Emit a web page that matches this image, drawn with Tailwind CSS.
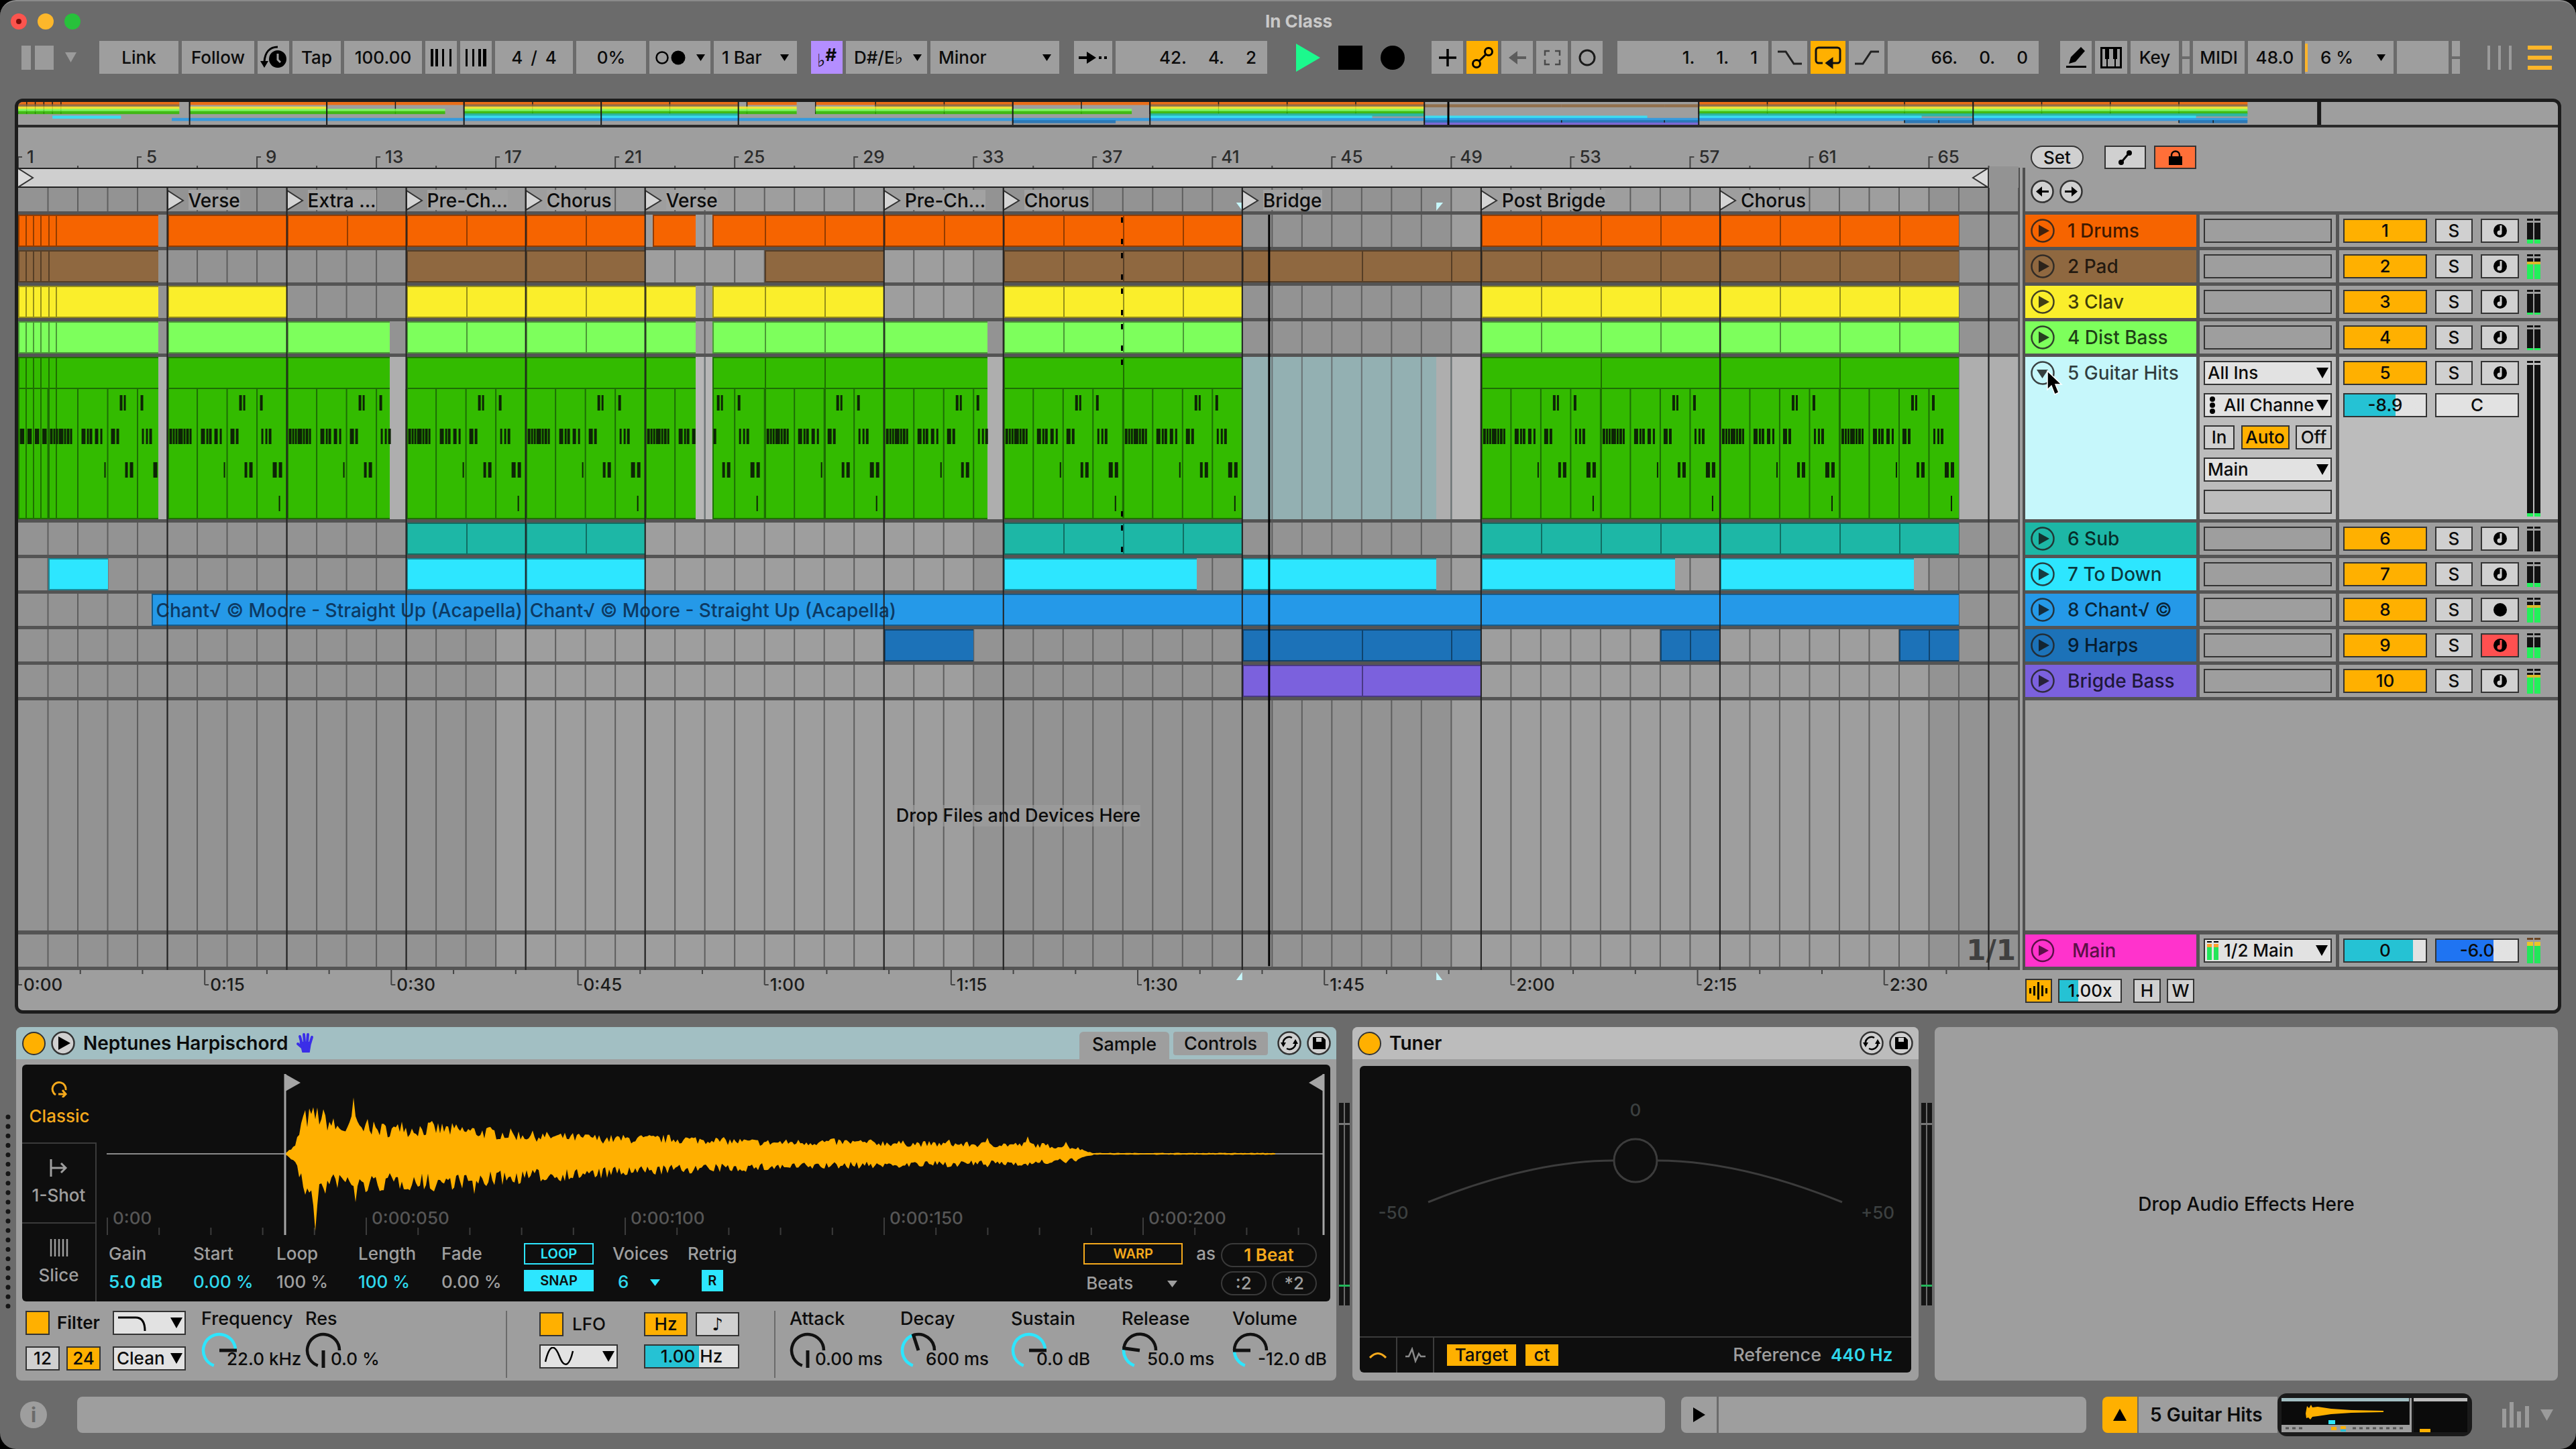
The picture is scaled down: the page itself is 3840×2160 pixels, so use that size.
<!DOCTYPE html>
<html lang="en">
<head>
  <meta charset="UTF-8" />
  <meta name="viewport" content="width=device-width, initial-scale=1.0" />
  <title>In Class</title>
  <script src="https://cdn.jsdelivr.net/npm/@tailwindcss/browser@4"></script>
  <style>
    body { font-family: Inter, 'DejaVu Sans', sans-serif; }
    input { min-width: 0; }
  </style>
</head>
<body class="bg-black text-[26px] leading-8 text-[#0c0c0c] font-medium">
<div class="relative flex min-h-screen flex-col overflow-hidden rounded-3xl border-t-2 border-[#8a8a8a] bg-[#6b6b6b]">

  <!-- Title bar -->
  <header class="relative flex h-[59px] items-center pl-4">
    <div class="flex gap-4">
      <span class="flex size-6 items-center justify-center rounded-full bg-[#fc544e]"><i class="size-2 rounded-full bg-[#7a0d0a]"></i></span>
      <span class="size-6 rounded-full bg-[#fdb72b]"></span>
      <span class="size-6 rounded-full bg-[#27c13b]"></span>
    </div>
    <h1 class="absolute inset-x-0 pl-8 text-center font-bold text-[#c9c9c9]">In Class</h1>
  </header>

  <!-- Control bar -->
  <nav class="flex h-[49px] items-stretch pl-8 pr-9">
    <button aria-label="Browser" class="flex w-[82px] items-center justify-between">
      <svg width="48" height="36"><path d="M0 0h14v36H0zM20 0h28v36H20z" fill="#9b9b9b"/></svg>
      <svg width="17" height="15"><path d="M0 0h17l-8.500 15z" fill="#9b9b9b"/></svg>
    </button>

    <div class="ml-[34px] flex gap-[5px]">
      <button class="w-[118px] bg-[#9e9e9e]">Link</button>
      <button class="w-[108px] bg-[#9e9e9e]">Follow</button>
      <button aria-label="Follow tempo" class="flex w-[47px] items-center justify-center bg-[#9e9e9e]">
        <svg width="40" height="36" viewBox="0 0 40 36"><circle cx="26" cy="20" r="13"/><path d="M26 12v9l4 4" fill="none" stroke="#9e9e9e" stroke-width="3"/><path d="M26 2C14 2 7 10 6 24" fill="none" stroke="#000" stroke-width="3"/><path d="M0 23h12l-6 10z"/></svg>
      </button>
      <button class="w-[72px] bg-[#9e9e9e]">Tap</button>
      <input aria-label="Tempo" value="100.00" class="w-[116px] bg-[#9e9e9e] text-center" />
      <button aria-label="Nudge down" class="flex w-[47px] items-center justify-center bg-[#9e9e9e]"><svg width="34" height="26"><path d="M1 0h4v26H1zM8 0h4v26H8zM18 0h3v26h-3zM29 0h3v26h-3z"/></svg></button>
      <button aria-label="Nudge up" class="flex w-[47px] items-center justify-center bg-[#9e9e9e]"><svg width="34" height="26"><path d="M1 0h3v26H1zM11 0h3v26h-3zM20 0h4v26h-4zM27 0h5v26h-5z"/></svg></button>
      <div class="flex w-[116px] items-center justify-center gap-3 bg-[#9e9e9e]"><span>4</span><span>/</span><span>4</span></div>
      <input aria-label="Groove amount" value="0%" class="w-[104px] bg-[#9e9e9e] text-center" />
      <button aria-label="Metronome" class="flex w-[91px] items-center justify-center gap-4 bg-[#9e9e9e]">
        <svg width="46" height="24"><circle cx="11" cy="12" r="8.500" fill="none" stroke="#000" stroke-width="2.500"/><circle cx="35" cy="12" r="10.500"/></svg>
        <svg width="13" height="10"><path d="M0 0h13l-6.500 10z"/></svg>
      </button>
      <button class="flex w-[124px] items-center justify-between bg-[#9e9e9e] px-3"><span>1 Bar</span><svg width="13" height="10"><path d="M0 0h13l-6.500 10z"/></svg></button>
    </div>

    <div class="ml-[21px] flex gap-[5px]">
      <button aria-label="Scale mode" class="flex w-[47px] items-center justify-center bg-[#b48eff] font-bold"><span class="pt-2">♭</span><span class="pb-2">#</span></button>
      <button class="flex w-[121px] items-center justify-between bg-[#9e9e9e] pl-3 pr-2"><span>D#/E♭</span><svg width="13" height="10"><path d="M0 0h13l-6.500 10z"/></svg></button>
      <button class="flex w-[192px] items-center justify-between bg-[#9e9e9e] px-3"><span>Minor</span><svg width="13" height="10"><path d="M0 0h13l-6.500 10z"/></svg></button>
    </div>

    <div class="ml-[22px] flex gap-[5px]">
      <button aria-label="Follow playback" class="flex w-[57px] items-center justify-center bg-[#9e9e9e]"><svg width="44" height="22"><path d="M0 9h12V2l14 9-14 9v-7H0zM30 9h4v4h-4zM38 9h4v4h-4z"/></svg></button>
      <div class="flex w-[226px] items-center justify-end gap-8 bg-[#9e9e9e] pr-4"><span>42.</span><span>4.</span><span>2</span></div>
    </div>

    <div class="ml-[43px] flex w-[162px] items-center justify-between">
      <button aria-label="Play"><svg width="36" height="42" class="block"><path d="M0 0l36 21L0 42z" fill="#1cf98d"/></svg></button>
      <button aria-label="Stop" class="size-9 bg-black"></button>
      <button aria-label="Record" class="size-9 rounded-full bg-black"></button>
    </div>

    <div class="ml-10 flex gap-[5px]">
      <button aria-label="Overdub" class="flex w-[47px] items-center justify-center bg-[#9e9e9e]"><svg width="26" height="26"><path d="M0 13h26M13 0v26" stroke="#000" stroke-width="3.500"/></svg></button>
      <button aria-label="Automation arm" class="flex w-[47px] items-center justify-center bg-[#ffb000]"><svg width="32" height="32" fill="none" stroke="#000" stroke-width="3"><circle cx="7" cy="25" r="5.500"/><circle cx="25" cy="7" r="5.500"/><path d="M11 21L21 11"/></svg></button>
      <button aria-label="Re-enable automation" class="flex w-[47px] items-center justify-center bg-[#9e9e9e]"><svg width="26" height="22"><path d="M26 9H13V1L0 11l13 10v-8h13z" fill="#5c5c5c"/></svg></button>
      <button aria-label="Capture" class="flex w-[47px] items-center justify-center bg-[#9e9e9e]"><svg width="26" height="24" fill="none" stroke="#4a4a4a" stroke-width="2.500"><path d="M2 9V2h7M17 2h7v7M24 15v7h-7M9 22H2v-7"/></svg></button>
      <button aria-label="Session record" class="flex w-[47px] items-center justify-center bg-[#9e9e9e]"><svg width="28" height="28"><circle cx="14" cy="14" r="11" fill="none" stroke="#1a1a1a" stroke-width="3"/></svg></button>
    </div>

    <div class="ml-[22px] flex gap-[5px]">
      <div class="flex w-[225px] items-center justify-end gap-8 bg-[#9e9e9e] pr-4"><span>1.</span><span>1.</span><span>1</span></div>
      <button aria-label="Punch in" class="flex w-[53px] items-center justify-center bg-[#9e9e9e]"><svg width="36" height="22" fill="none" stroke="#222" stroke-width="3"><path d="M0 2h12l12 18h12"/></svg></button>
      <button aria-label="Loop" class="flex w-[52px] items-center justify-center bg-[#ffb000]"><svg width="40" height="34" fill="none" stroke="#111" stroke-width="3"><path d="M12 25H6a4 4 0 0 1-4-4V6a4 4 0 0 1 4-4h28a4 4 0 0 1 4 4v15a4 4 0 0 1-4 4h-8"/><path d="M18 25l8-6v12z" fill="#111"/></svg></button>
      <button aria-label="Punch out" class="flex w-[53px] items-center justify-center bg-[#9e9e9e]"><svg width="36" height="22" fill="none" stroke="#222" stroke-width="3"><path d="M0 20h12L24 2h12"/></svg></button>
      <div class="flex w-[225px] items-center justify-end gap-8 bg-[#9e9e9e] pr-4"><span>66.</span><span>0.</span><span>0</span></div>
    </div>

    <div class="ml-[32px] flex gap-[5px]">
      <button aria-label="Draw mode" class="flex w-[47px] items-center justify-center bg-[#9e9e9e]"><svg width="32" height="32"><path d="M23 0l6 6-14 16-10 3 3-10zM1 28h30v3H1z"/></svg></button>
      <button aria-label="Computer MIDI keyboard" class="flex w-[48px] items-center justify-center bg-[#9e9e9e]"><svg width="32" height="32"><path d="M1.500 1.500h29v29h-29z" fill="none" stroke="#000" stroke-width="3"/><path d="M7 0h6v18H7zM19 0h6v18h-6zM9 16h2v15H9zM21 16h2v15h-2z"/></svg></button>
      <button class="w-[72px] bg-[#9e9e9e]">Key</button>
      <span class="flex w-[11px] flex-col gap-1"><i class="flex-1 bg-[#9e9e9e]"></i><i class="flex-1 bg-[#9e9e9e]"></i></span>
      <button class="w-[77px] bg-[#9e9e9e]">MIDI</button>
      <button class="w-[80px] bg-[#9e9e9e]">48.0</button>
      <button class="flex w-[132px] items-center justify-between bg-[#9e9e9e] pr-3"><i class="h-[42px] w-1 bg-[#ffb52b]"></i><span>6 %</span><svg width="13" height="10" class="ml-4"><path d="M0 0h13l-6.500 10z"/></svg></button>
      <span class="w-[77px] bg-[#9e9e9e]"></span>
      <span class="flex w-[12px] flex-col gap-1"><i class="flex-1 bg-[#9e9e9e]"></i><i class="flex-1 bg-[#9e9e9e]"></i></span>
    </div>

    <div class="ml-auto flex items-center gap-6">
      <button aria-label="Session view"><svg width="36" height="36" class="block"><path d="M0 0h4v36H0zM16 0h4v36h-4zM32 0h4v36h-4z" fill="#9b9b9b"/></svg></button>
      <button aria-label="Arrangement view"><svg width="36" height="36" class="block"><path d="M0 0h36v6H0zM0 15h36v6H0zM0 30h36v6H0z" fill="#fdb52a"/></svg></button>
    </div>
  </nav>

  <!-- Arrangement -->
  <main class="mx-[22px] mt-[37px] flex flex-1 flex-col overflow-hidden rounded-xl border-5 border-[#1c1c1c] bg-[#9e9e9e]">
    <svg id="overview" class="h-[34px] w-full shrink-0"></svg>
    <div class="h-1 shrink-0 bg-[#2a2a2a]"></div>

    <div class="flex flex-1">
      <!-- Timeline -->
      <section class="flex flex-1 flex-col">
        <svg id="barRuler" class="h-[60px] w-full text-[#333]"></svg>
        <div class="relative flex h-[30px] bg-[#939393]">
          <div class="flex flex-[66] items-center justify-between border-y-2 border-[#222] bg-[#cfcfcf]">
            <svg width="24" height="28" fill="#dadada" stroke="#333" stroke-width="2"><path d="M0 0l22 14L0 28"/></svg>
            <svg width="24" height="28" fill="#dadada" stroke="#333" stroke-width="2"><path d="M24 0L2 14l22 14"/></svg>
          </div>
          <div class="flex-1 border-l-2 border-[#333]"></div>
        </div>

        <div class="relative flex flex-1 flex-col">
          <svg id="grid" class="absolute inset-0 size-full"></svg>
          <div id="locators" class="relative h-[35px] overflow-hidden text-[28px]"></div>
          <div class="relative h-[5px] bg-[#545454]"></div>
          <div id="lanes" class="relative text-[28px]"></div>
          <div class="relative flex flex-1 items-center justify-center">
            <p class="bg-[#9e9e9e]/60 text-[27px]">Drop Files and Devices Here</p>
          </div>
          <div class="relative h-[6px] bg-[#545454]"></div>
          <div class="relative flex h-12 items-center justify-end pr-1 font-['DejaVu_Sans'] text-[42px] font-bold text-[#404040]">1/1</div>
          <div class="relative h-[5px] bg-[#545454]"></div>
          <svg id="markers" class="pointer-events-none absolute inset-0 size-full"></svg>
        </div>
        <svg id="timeRuler" class="h-[60px] w-full"></svg>
      </section>

      <!-- Track headers -->
      <aside class="flex w-[804px] shrink-0">
        <div class="my-[60px] w-[10px] border-x-2 border-[#4f4f4f] border-r-4"></div>
        <div class="flex flex-1 flex-col">
          <div class="h-[125px] px-2 pt-[27px]">
            <div class="flex items-center">
              <button class="h-[35px] w-[79px] rounded-full border-2 border-[#333] bg-[#d0d0d0] leading-7">Set</button>
              <button aria-label="Automation mode" class="ml-[31px] flex h-[35px] w-[62px] items-center justify-center border-2 border-[#333] bg-[#d0d0d0]"><svg width="20" height="22"><path d="M4 18L16 4" stroke="#000" stroke-width="3"/><circle cx="4" cy="18" r="4"/><circle cx="16" cy="4" r="4"/></svg></button>
              <button aria-label="Lock envelopes" class="ml-3 flex h-[35px] w-[63px] items-center justify-center border-2 border-[#333] bg-[#ff6f38]"><svg width="20" height="22"><path d="M0 9h20v13H0z"/><path d="M4 10V7a6 5.500 0 0 1 12 0v3" fill="none" stroke="#000" stroke-width="2.500"/></svg></button>
            </div>
            <div class="mt-4 flex gap-2">
              <button aria-label="Previous locator"><svg width="35" height="35" class="block"><circle cx="17.500" cy="17.500" r="16" fill="#d0d0d0" stroke="#333" stroke-width="2.500"/><path d="M27 16H17v-6l-9 7.500 9 7.500v-6h10z"/></svg></button>
              <button aria-label="Next locator"><svg width="35" height="35" class="block"><circle cx="17.500" cy="17.500" r="16" fill="#d0d0d0" stroke="#333" stroke-width="2.500"/><path d="M8 16h10v-6l9 7.500-9 7.500v-6H8z"/></svg></button>
            </div>
          </div>
          <div class="h-[5px] bg-[#545454]"></div>
          <div id="headers"></div>
          <div class="flex-1"></div>
          <div class="h-[6px] bg-[#545454]"></div>
          <div class="flex h-12 gap-[5px] bg-[#545454]">
            <div class="flex w-[255px] items-center gap-[26px] bg-[#ff33cc] pl-2">
              <button aria-label="Unfold Main"><svg width="36" height="36" class="block"><circle cx="18" cy="18" r="16" fill="none" stroke="#5c1048" stroke-width="2.500"/><path d="M12 10l15 8-15 8z" fill="#5c1048"/></svg></button>
              <span class="text-[28px] text-[#5c1048]">Main</span>
            </div>
            <div class="w-[203px] bg-[#9e9e9e] px-[6px] py-[6px]">
              <div class="relative">
                <select aria-label="Main output" class="block h-9 w-full appearance-none border-2 border-[#333] bg-[#e2e2e2] pl-7"><option>1/2 Main</option></select>
                <svg width="18" height="30" class="absolute left-[5px] top-[4px]"><path d="M0 8h7v20H0zM10 8h7v20h-7z" fill="#22e65a"/><path d="M0 4h7v5H0zM10 4h7v5h-7z" fill="#ffa22e"/><path d="M0 0h7v2H0zM10 0h7v2h-7z"/></svg>
                <svg width="18" height="16" class="absolute right-[6px] top-[10px]"><path d="M0 0h18L9 16z"/></svg>
              </div>
            </div>
            <div class="flex flex-1 items-center gap-3 bg-[#9e9e9e] pl-[6px]">
              <div class="h-9 w-[125px] border-2 border-[#333] bg-[#e2e2e2] bg-linear-to-r from-[#25c2d4] from-84% to-[#e2e2e2] to-84% text-center">0</div>
              <div class="h-9 w-[125px] border-2 border-[#333] bg-linear-to-r from-[#1f74f2] from-70% to-[#e2e2e2] to-70% text-center">-6.0</div>
              <svg width="20" height="38"><path d="M0 10h9v28H0zM11 10h9v28h-9z" fill="#22e65a"/><path d="M0 6h9v6H0zM11 6h9v6h-9z" fill="#e9c62a"/><path d="M0 0h9v3H0zM11 0h9v3h-9z" fill="#6b4423"/></svg>
            </div>
          </div>
          <div class="h-[5px] bg-[#545454]"></div>
          <div class="flex h-[60px] items-start pt-[13px]">
            <button aria-label="Optimize" class="flex h-9 w-10 items-center justify-center border-2 border-[#333] bg-[#ffb000]"><svg width="28" height="26"><path d="M0 9h3v8H0zM6 6h3v14H6zM12 0h3v26h-3zM18 5h3v16h-3zM24 9h3v8h-3z"/></svg></button>
            <div class="ml-[9px] h-9 w-[95px] border-2 border-[#333] bg-linear-to-r from-[#25c2d4] from-31% to-[#e2e2e2] to-31% text-center">1.00x</div>
            <button class="ml-[17px] h-9 w-[41px] border-2 border-[#333] bg-[#d0d0d0] leading-8">H</button>
            <button class="ml-[9px] h-9 w-[41px] border-2 border-[#333] bg-[#d0d0d0] leading-8">W</button>
          </div>
        </div>
      </aside>
    </div>
  </main>

  <!-- Devices -->
  <section class="relative mt-5 flex h-[527px] pl-6 pr-[27px]">
    <svg width="8" height="290" class="absolute left-2 top-[130px]"><path d="M4 4v290" stroke="#161616" stroke-width="7" stroke-dasharray="0.100 14" stroke-linecap="round"/></svg>

    <article class="flex w-[1968px] shrink-0 flex-col overflow-hidden rounded-lg bg-[#9e9e9e]">
      <header class="flex h-12 items-center bg-[#a2bfc3] pl-[9px] pr-2">
        <button aria-label="Device on" class="size-[35px] rounded-full border-2 border-[#333] bg-[#ffb000]"></button>
        <button aria-label="Show chain" class="ml-2"><svg width="36" height="36" class="block"><circle cx="18" cy="18" r="16.500" fill="#d0d0d0" stroke="#333" stroke-width="2.500"/><path d="M11 8l18 10-18 10z"/></svg></button>
        <h2 class="ml-3 text-[28px] font-semibold">Neptunes Harpischord</h2>
        <svg width="28" height="32" viewBox="0 0 28 32" class="ml-3" stroke="#3a2ee8" stroke-width="4" stroke-linecap="round" fill="#3a2ee8"><path d="M8 16h13l-2 12h-8zM9 17L6 6M13 15L12 3M17 15l1-12M21 17l3-10M10 23l-7-6"/></svg>
        <div class="ml-auto flex h-full items-end text-[27px]">
          <button class="h-[41px] w-[134px] rounded-t-md bg-[#9e9e9e] pb-1">Sample</button>
          <button class="mb-[6px] ml-[6px] h-[35px] w-[141px] rounded-sm bg-[#9e9e9e]">Controls</button>
        </div>
        <button aria-label="Hot-swap" class="ml-[14px]"><svg width="36" height="36" class="block"><circle cx="18" cy="18" r="16.500" fill="#d0d0d0" stroke="#333" stroke-width="2.500"/><path d="M9 20a9 9 0 0 1 13-10M27 16a9 9 0 0 1-13 10" fill="none" stroke="#000" stroke-width="2.500"/><path d="M5 17l8 0-4 7zM31 19h-8l4-7z"/></svg></button>
        <button aria-label="Save preset" class="ml-2"><svg width="36" height="36" class="block"><circle cx="18" cy="18" r="16.500" fill="#d0d0d0" stroke="#333" stroke-width="2.500"/><path d="M9 9h15l4 4v14H9z"/><path d="M14 10h8v6h-8z" fill="#d0d0d0"/></svg></button>
      </header>

      <div class="mx-[9px] mt-2 flex h-[353px] overflow-hidden rounded-md bg-[#0e0e0e] text-[#9e9e9e]">
        <div class="flex w-[111px] flex-col">
          <button class="flex flex-1 flex-col items-center justify-center gap-3 text-[#f5a91c]"><svg width="28" height="26" fill="none" stroke="#f5a91c" stroke-width="3"><path d="M8 22A10 10 0 1 1 23 15"/><path d="M12 21h11M18 15l5 6-5 5"/></svg>Classic</button>
          <button class="flex flex-1 flex-col items-center justify-center gap-3 border-y-2 border-r-2 border-[#3a3a3a]"><svg width="28" height="26" fill="none" stroke="#9e9e9e" stroke-width="3"><path d="M2 0v26M2 13h22M17 6l7 7-7 7"/></svg>1-Shot</button>
          <button class="flex flex-1 flex-col items-center justify-center gap-3 border-r-2 border-[#3a3a3a]"><svg width="28" height="26" stroke="#9e9e9e" stroke-width="2.500"><path d="M2 0v26M8 0v26M14 0v26M20 0v26M26 0v26"/></svg>Slice</button>
        </div>
        <div class="flex flex-1 flex-col">
          <svg id="wave" viewBox="0 0 1839 254" preserveAspectRatio="none" class="h-[254px] w-full"></svg>
          <div class="flex flex-1 items-start pl-[18px] pr-5 pt-3">
            <label class="flex w-[126px] flex-col gap-[10px]">Gain<input value="5.0 dB" class="font-semibold text-[#2fd8ec]" /></label>
            <label class="flex w-[124px] flex-col gap-[10px]">Start<input value="0.00 %" class="text-[#2fd8ec]" /></label>
            <label class="flex w-[122px] flex-col gap-[10px]">Loop<input value="100 %" /></label>
            <label class="flex w-[124px] flex-col gap-[10px]">Length<input value="100 %" class="text-[#2fd8ec]" /></label>
            <label class="flex w-[123px] flex-col gap-[10px]">Fade<input value="0.00 %" /></label>
            <div class="flex w-[104px] flex-col gap-2 text-[20px] font-semibold">
              <button class="h-8 border-2 border-[#2de6ff] leading-7 text-[#2de6ff]">LOOP</button>
              <button class="h-8 bg-[#2de6ff] text-[#0e0e0e]">SNAP</button>
            </div>
            <label class="ml-7 flex w-[112px] flex-col gap-[10px]">Voices
              <span class="relative block"><select class="w-full appearance-none pl-2 text-[#2fd8ec]"><option>6</option></select><svg width="15" height="10" class="absolute left-14 top-3"><path d="M0 0h15L7.500 10z" fill="#2de6ff"/></svg></span>
            </label>
            <div class="flex flex-col items-center gap-2">Retrig<button aria-label="Retrigger" class="size-8 bg-[#2de6ff] text-[20px] font-semibold text-[#0e0e0e]">R</button></div>
            <div class="ml-auto flex w-[148px] flex-col gap-2">
              <button class="h-8 border-2 border-[#f5a91c] text-[20px] font-semibold leading-7 text-[#f5a91c]">WARP</button>
              <span class="relative block pt-1"><select aria-label="Warp mode" class="w-full appearance-none pl-1"><option>Beats</option></select><svg width="15" height="10" class="absolute right-2 top-4"><path d="M0 0h15L7.500 10z" fill="#9e9e9e"/></svg></span>
            </div>
            <span class="ml-5">as</span>
            <div class="ml-2 flex w-[143px] flex-col gap-[6px]">
              <button class="h-9 rounded-full border-2 border-[#3a3a3a] font-semibold leading-8 text-[#f5a91c]">1 Beat</button>
              <div class="flex gap-2"><button class="h-9 flex-1 rounded-full border-2 border-[#3a3a3a] leading-8">:2</button><button class="h-9 flex-1 rounded-full border-2 border-[#3a3a3a] leading-8">*2</button></div>
            </div>
          </div>
        </div>
      </div>

      <div class="flex flex-1 items-start pl-[14px] pt-[14px]">
        <div class="flex flex-col gap-[17px]">
          <div class="flex h-9 items-center gap-[11px]"><input id="filterOn" type="checkbox" checked class="size-9 appearance-none border-2 border-[#333] bg-[#ffb000]" /><label for="filterOn" class="font-semibold">Filter</label></div>
          <div class="flex gap-[10px]"><button class="h-9 w-[51px] border-2 border-[#333] bg-[#d0d0d0] leading-8">12</button><button class="h-9 w-[51px] border-2 border-[#333] bg-[#ffb000] leading-8">24</button></div>
        </div>
        <div class="ml-[18px] flex w-[109px] flex-col gap-[17px]">
          <div class="relative"><select aria-label="Filter type" class="block h-9 w-full appearance-none border-2 border-[#333] bg-[#e2e2e2]"><option></option></select>
            <svg width="44" height="24" class="absolute left-2 top-2" fill="none" stroke="#000" stroke-width="3"><path d="M0 2h26q14 0 14 20"/></svg>
            <svg width="18" height="16" class="absolute right-[5px] top-[10px]"><path d="M0 0h18L9 16z"/></svg></div>
          <div class="relative"><select aria-label="Circuit" class="block h-9 w-full appearance-none border-2 border-[#333] bg-[#e2e2e2] pl-1"><option>Clean</option></select>
            <svg width="18" height="16" class="absolute right-[5px] top-[10px]"><path d="M0 0h18L9 16z"/></svg></div>
        </div>
        <div class="-mt-1 ml-[23px] w-[155px] text-[27px]">Frequency<div class="flex items-end whitespace-nowrap pt-1 text-[26px]"><span data-knob="450"></span><span class="-ml-4">22.0 kHz</span></div></div>
        <div class="-mt-1 w-[299px] text-[27px]">Res<div class="flex items-end whitespace-nowrap pt-1 text-[26px]"><span data-knob="180"></span><span class="-ml-4">0.0 %</span></div></div>
        <i class="h-[100px] w-[2px] bg-[#6b6b6b]"></i>
        <div class="ml-[48px] flex flex-col gap-3 pt-[2px]">
          <div class="flex h-9 items-center gap-[13px]"><input id="lfoOn" type="checkbox" checked class="size-9 appearance-none border-2 border-[#333] bg-[#ffb000]" /><label for="lfoOn">LFO</label></div>
          <div class="relative w-[117px]"><select aria-label="LFO shape" class="block h-9 w-full appearance-none border-2 border-[#333] bg-[#e2e2e2]"><option></option></select>
            <svg width="46" height="28" class="absolute left-2 top-1" fill="none" stroke="#000" stroke-width="2.500"><path d="M1 22C8-8 16-2 22 14s14 18 20-8"/></svg>
            <svg width="18" height="16" class="absolute right-[5px] top-[10px]"><path d="M0 0h18L9 16z"/></svg></div>
        </div>
        <div class="ml-[39px] flex w-[142px] flex-col gap-3 pt-[2px]">
          <div class="flex justify-between"><button class="h-9 w-[65px] border-2 border-[#333] bg-[#ffb000] leading-8">Hz</button><button aria-label="Sync" class="h-9 w-[65px] border-2 border-[#333] bg-[#d0d0d0] leading-8">♪</button></div>
          <div class="h-9 border-2 border-[#333] bg-linear-to-r from-[#25c2d4] from-58% to-[#e2e2e2] to-58% text-center">1.00 Hz</div>
        </div>
        <i class="ml-[52px] h-[100px] w-[2px] bg-[#6b6b6b]"></i>
        <div class="-mt-1 ml-[21px] flex whitespace-nowrap text-[27px]">
          <div class="w-[165px]">Attack<div class="flex items-end pt-1 text-[26px]"><span data-knob="180"></span><span class="-ml-4">0.00 ms</span></div></div>
          <div class="w-[165px]">Decay<div class="flex items-end pt-1 text-[26px]"><span data-knob="342"></span><span class="-ml-4">600 ms</span></div></div>
          <div class="w-[165px]">Sustain<div class="flex items-end pt-1 text-[26px]"><span data-knob="450"></span><span class="-ml-4">0.0 dB</span></div></div>
          <div class="w-[165px]">Release<div class="flex items-end pt-1 text-[26px]"><span data-knob="278"></span><span class="-ml-4">50.0 ms</span></div></div>
          <div>Volume<div class="flex items-end pt-1 text-[26px]"><span data-knob="270"></span><span class="-ml-4">-12.0 dB</span></div></div>
        </div>
      </div>
    </article>

    <svg width="24" height="302" class="mt-[113px] shrink-0"><path d="M4 0h7v302H4zM13 0h7v302h-7z" fill="#141414"/><path d="M4 30h16v3H4z" fill="#777"/><path d="M4 271h16v3H4z" fill="#22b65a"/></svg>

    <article class="flex w-[844px] shrink-0 flex-col overflow-hidden rounded-lg bg-[#9e9e9e]">
      <header class="flex h-12 items-center bg-[#bcbcbc] pl-2 pr-2">
        <button aria-label="Device on" class="size-[35px] rounded-full border-2 border-[#333] bg-[#ffb000]"></button>
        <h2 class="ml-3 text-[28px] font-semibold">Tuner</h2>
        <button aria-label="Hot-swap" class="ml-auto"><svg width="36" height="36" class="block"><circle cx="18" cy="18" r="16.500" fill="#d0d0d0" stroke="#333" stroke-width="2.500"/><path d="M9 20a9 9 0 0 1 13-10M27 16a9 9 0 0 1-13 10" fill="none" stroke="#000" stroke-width="2.500"/><path d="M5 17l8 0-4 7zM31 19h-8l4-7z"/></svg></button>
        <button aria-label="Save preset" class="ml-2"><svg width="36" height="36" class="block"><circle cx="18" cy="18" r="16.500" fill="#d0d0d0" stroke="#333" stroke-width="2.500"/><path d="M9 9h15l4 4v14H9z"/><path d="M14 10h8v6h-8z" fill="#d0d0d0"/></svg></button>
      </header>
      <div class="mx-[11px] mb-3 mt-[10px] flex flex-1 flex-col overflow-hidden rounded-md bg-[#0e0e0e] text-[#3c4040]">
        <svg viewBox="0 0 822 403" class="w-full flex-1" font-size="26" fill="currentColor" text-anchor="middle">
          <path d="M102 203Q256 141 379 141M443 141Q566 141 719 203" fill="none" stroke="#3c3c3c" stroke-width="3"/>
          <circle cx="411" cy="141" r="32" fill="none" stroke="#3c3c3c" stroke-width="3"/>
          <text x="411" y="75">0</text><text x="50" y="228">-50</text><text x="772" y="228">+50</text>
        </svg>
        <div class="flex h-[54px] items-center border-t-2 border-[#3c3c3c]">
          <button aria-label="Classic view" class="flex h-full w-[56px] items-center justify-center border-r-2 border-[#3c3c3c]"><svg width="26" height="10" fill="none" stroke="#f5a91c" stroke-width="3"><path d="M1 9Q13-4 25 9"/></svg></button>
          <button aria-label="Histogram view" class="flex h-full w-[55px] items-center justify-center border-r-2 border-[#3c3c3c]"><svg width="30" height="24" fill="none" stroke="#8a8a8a" stroke-width="2.500"><path d="M0 14h5l5-11 5 18 5-11 3 4h7"/></svg></button>
          <button class="ml-[19px] h-8 w-[103px] bg-[#ffb000] text-[#0e0e0e]">Target</button>
          <button class="ml-[14px] h-8 w-[49px] bg-[#ffb000] text-[#0e0e0e]">ct</button>
          <label class="ml-auto flex gap-[14px] text-[27px] text-[#9e9e9e]">Reference <input value="440 Hz" class="w-[120px] text-[26px] font-semibold text-[#2fd8ec]" /></label>
        </div>
      </div>
    </article>

    <svg width="24" height="302" class="mt-[113px] shrink-0"><path d="M4 0h7v302H4zM13 0h7v302h-7z" fill="#141414"/><path d="M4 30h16v3H4z" fill="#777"/><path d="M4 271h16v3H4z" fill="#22b65a"/></svg>

    <div class="flex flex-1 items-center justify-center rounded-lg bg-[#9e9e9e]"><p class="text-[28px]">Drop Audio Effects Here</p></div>
  </section>

  <!-- Status bar -->
  <footer class="mb-6 mt-6 flex h-[54px] items-stretch pl-[30px] pr-[34px]">
    <button aria-label="Info" class="my-auto size-10 rounded-full bg-[#9e9e9e] text-[30px] font-bold text-[#6b6b6b]">i</button>
    <div class="ml-[45px] flex-1 rounded-lg bg-[#9e9e9e]"></div>
    <div class="ml-6 flex w-[604px] gap-[3px]">
      <button aria-label="Show clip" class="flex w-[53px] items-center justify-center rounded-l-lg bg-[#9e9e9e]"><svg width="18" height="22"><path d="M0 0l18 11L0 22z"/></svg></button>
      <div class="flex-1 rounded-r-lg bg-[#9e9e9e]"></div>
    </div>
    <div class="ml-6 flex w-[261px]">
      <button aria-label="Show device" class="flex w-[54px] items-center justify-center rounded-l-lg border-r-2 border-[#6b6b6b] bg-[#ffb000]"><svg width="20" height="18"><path d="M10 0l10 18H0z"/></svg></button>
      <div class="flex flex-1 items-center whitespace-nowrap bg-[#9e9e9e] pl-[17px] text-[28px] font-semibold">5 Guitar Hits</div>
    </div>
    <svg width="290" height="64" viewBox="0 0 290 64" class="-my-[5px] shrink-0">
      <rect width="290" height="64" rx="14" fill="#1a1a1a"/><path d="M6 7h190v5H6z" fill="#a2bfc3"/><path d="M203 7h80v5h-80z" fill="#bcbcbc"/><path d="M6 13h190v34H6zM203 13h80v45h-80z" fill="#0b0b0b"/><path d="M6 47h192v11H6zM197 7h3v51h-3z" fill="#9e9e9e"/>
      <path d="M42 30l2-11 3 3 3-5 2 4 8-1 20 3 30 2 48 1v2l-48 1-30 2-20 3-8 1-3 4-3-3-3 1z" fill="#ffb000"/><path d="M76 40h10v6H76z" fill="#2de6ff"/><path d="M80 50h8v5h-8zM94 49h8v4h-8zM212 53h16v5h-16z" fill="#ffb000"/><path d="M94 54h8v3h-8z" fill="#25c2d4"/><path d="M12 52h30M112 52h80" stroke="#555" stroke-width="3" stroke-dasharray="5 5"/>
    </svg>
    <button aria-label="Mixer" class="ml-[45px] flex items-center gap-[17px]">
      <svg width="40" height="38"><path d="M0 10h6v28H0zM11 0h6v38h-6zM22 14h6v24h-6zM34 6h6v32h-6z" fill="#9b9b9b"/></svg>
      <svg width="19" height="17"><path d="M0 0h19L9.500 17z" fill="#9b9b9b"/></svg>
    </button>
  </footer>
</div>

<script>
  const BARS = 67;        // bars visible in the timeline
  const SONG = 74.05;     // bars in the overview strip
  const pct = (bar) => (bar - 1) / BARS * 100;

  // from a to b in steps of two bars
  const every2 = (a, b) => {
    const out = [];
    for (let i = a; i < b; i += 2) out.push([i, i + 2]);
    return out;
  };
  const intro = [[1, 1.25], [1.25, 1.5], [1.5, 1.75], [1.75, 2], [2, 2.25], [2.25, 5.7]];

  const tracks = [
    { n: "1", name: "1 Drums", color: "#f66400", level: 0.2, clips: [...intro, [6, 10], ...every2(10, 22), [22.25, 23.7], [24.25, 26], ...every2(26, 42), ...every2(50, 66)] },
    { n: "2", name: "2 Pad", color: "#8f6840", level: 0.85, clips: [...intro.slice(0, 4), [2, 5.7], [14, 18], [18, 20], [20, 22], [26, 30], ...every2(34, 42), [42, 46], [46, 49], [49, 50], ...every2(50, 66)] },
    { n: "3", name: "3 Clav", color: "#faee2b", level: 0.1, clips: [...intro, [6, 10], ...every2(14, 22), [22, 23.7], [24.25, 26], ...every2(26, 30), ...every2(34, 42), ...every2(50, 66)] },
    { n: "4", name: "4 Dist Bass", color: "#7dff5c", level: 0.1, clips: [...intro, [6, 10], [10, 13.45], ...every2(14, 22), [22, 23.7], [24.25, 26], [26, 28], [28, 30], [30, 33.47], ...every2(34, 42), ...every2(50, 66)] },
    { n: "5", name: "5 Guitar Hits", color: "#33bb00", level: 0.02, tall: true, clips: [...intro, [6, 10], [10, 13.45], [14, 18], [18, 22], [22, 23.7], [24.25, 26], [26, 28], [28, 30], [30, 33.47], [34, 38], [38, 42], [50, 54], [54, 58], [58, 62], [62, 66]] },
    { n: "6", name: "6 Sub", color: "#1db7a6", level: 0, clips: [...every2(14, 22), ...every2(34, 42), ...every2(50, 66)] },
    { n: "7", name: "7 To Down", color: "#2de6ff", level: 0.2, clips: [[2, 4], [14, 18], [18, 22], [34, 40.48], [42, 48.5], [50, 56.5], [58, 64.5]] },
    { n: "8", name: "8 Chant√ ©", color: "#2599e8", level: 0.85, audio: true, label: "Chant√ © Moore - Straight Up (Acapella)", clips: [[5.48, 18], [18, 66]] },
    { n: "9", name: "9 Harps", color: "#1c72b8", level: 0.5, armed: true, clips: [[30, 33], [42, 46], [46, 49], [49, 50], [56, 57], [57, 58], [64, 65], [65, 66]] },
    { n: "10", name: "Brigde Bass", color: "#7b61dd", level: 0.9, clips: [[42, 46], [46, 50]] },
  ];
  const locators = [[6, "Verse"], [10, "Extra ..."], [14, "Pre-Ch..."], [18, "Chorus"], [22, "Verse"], [30, "Pre-Ch..."], [34, "Chorus"], [42, "Bridge"], [50, "Post Brigde"], [58, "Chorus"]];

  const el = (id) => document.getElementById(id);
  const vline = (x, y1, y2, color, w) => `<line x1="${x}%" x2="${x}%" y1="${y1}" y2="${y2}" stroke="${color}" stroke-width="${w}"/>`;

  // Overview strip
  let html = "";
  const opct = (bar) => (bar - 1) / SONG * 100;
  tracks.forEach((t, i) => t.clips.forEach(([a, b]) => {
    html += `<rect x="${opct(a)}%" y="${i * 3.4}" width="${opct(b) - opct(a)}%" height="4.5" fill="${t.color}" opacity="0.85"/>`;
    if (i === 0 || i === 8) html += vline(opct(a), i * 3.4, i * 3.4 + (i ? 4 : 18), "#1a1a1a", 1.5);
  }));
  locators.forEach(([b]) => html += vline(opct(b), 0, 34, "#1a1a1a", 2));
  html += vline(opct(42.7), 0, 34, "#000", 3);
  html += `<line x1="90.600%" x2="90.600%" y1="0" y2="34" stroke="#1a1a1a" stroke-width="6" stroke-linecap="round"/>`;
  el("overview").innerHTML = html;

  // Bar ruler
  html = `<rect x="${pct(67)}%" y="58" width="2%" height="2" fill="#939393"/>`;
  for (let b = 1; b <= 67; b += 2) {
    const major = b % 4 === 1;
    html += vline(pct(b), major ? 43 : 57, 60, "#444", 2);
    if (major) html += `<svg x="${pct(b)}%" overflow="visible"><path d="M0 44h6" stroke="#444" stroke-width="2"/><text x="13" y="53" fill="#2c2c2c" font-size="26">${b}</text></svg>`;
  }
  el("barRuler").innerHTML = html;

  // Time ruler, 15 seconds are 6.25 bars
  html = "";
  for (let s = 0; s <= 155; s += 5) {
    const x = pct(1 + s / 15 * 6.25);
    const major = s % 15 === 0;
    html += vline(x, 0, major ? 22 : 6, "#444", 2);
    if (major) html += `<svg x="${x}%" overflow="visible"><path d="M0 22h6" stroke="#444" stroke-width="2"/><text x="8" y="31" fill="#1c1c1c" font-size="26">${Math.floor(s / 60)}:${String(s % 60).padStart(2, "0")}</text></svg>`;
  }
  html += `<svg x="${pct(42)}%" overflow="visible"><path d="M0 3v12h-9z" fill="#c6f7fb"/></svg><svg x="${pct(48.5)}%" overflow="visible"><path d="M0 3v12h9z" fill="#c6f7fb"/></svg>`;
  el("timeRuler").innerHTML = html;

  // Grid shading and bar lines
  html = "";
  [[1, 17, "#939393"], [17, 33, "#9e9e9e"], [33, 49, "#939393"], [49, 65, "#9e9e9e"], [65, 68, "#939393"]].forEach(([a, b, c]) => {
    html += `<rect x="${pct(a)}%" width="${pct(b) - pct(a)}%" height="100%" fill="${c}"/>`;
  });
  const barLines = (color) => {
    let out = "";
    for (let b = 2; b <= 68; b++) out += vline(pct(b), 0, "100%", color, 2);
    return out;
  };
  el("grid").innerHTML = html + barLines("#5e5e5e");

  // Locators
  el("locators").innerHTML = locators.map(([b, name]) => `
    <button class="absolute bottom-0 flex items-center gap-[6px]" style="left:${pct(b)}%">
      <svg width="25" height="34"><path d="M0 3l23 15L0 32z" fill="#d4d4d4" stroke="#333" stroke-width="2"/></svg>
      <span class="h-[30px] bg-[#a2a2a2] leading-8">${name}</span>
    </button>`).join("") +
    `<svg class="absolute inset-0 size-full overflow-visible"><svg x="${pct(42)}%" overflow="visible"><path d="M0 22h-9l9 12z" fill="#c6f7fb"/></svg><svg x="${pct(48.5)}%" overflow="visible"><path d="M0 22h10L0 34z" fill="#c6f7fb"/></svg></svg>`;

  // Notes of one four-bar phrase: [x, width, row], 178 units wide
  const phrase = [
    [3, 4, 1], [8, 3, 1], [12, 3, 1], [16, 7, 1], [24, 3, 1], [28, 4, 1], [33, 3, 1],
    [50, 6, 1], [58, 3, 1], [62, 4, 1], [70, 5, 1], [78, 3, 1],
    [94, 6, 1], [102, 4, 1], [140, 3, 1], [146, 3, 1], [151, 4, 1],
    [107, 4, 0], [113, 3, 0], [138, 4, 0],
    [84, 2, 2], [115, 4, 2], [122, 5, 2], [157, 6, 2], [166, 5, 2],
    [166, 2, 3],
  ];
  function drawNotes(track) {
    let out = "";
    const inside = (bar) => track.clips.some(([a, b]) => bar >= a && bar < b);
    for (let b = 2; b <= 66; b++) if (inside(b)) out += vline(pct(b), 48, 242, "#1d6e05", 2);
    const starts = [2, 6, 10, 14, 18, 22, 26, 30, 34, 38, 50, 54, 58, 62];
    for (let q = 1; q < 2; q += 0.25) out += `<rect x="${pct(q + 0.06)}%" y="107" width="0.220%" height="23" fill="#0d2406"/>`;
    starts.forEach((s) => phrase.forEach(([x, w, row]) => {
      const bar = s + x / 44.5;
      if (inside(bar) && !(s === 2 && bar >= 5.7)) out += `<rect x="${pct(bar)}%" y="${57 + row * 50}" width="${w / 44.5 / BARS * 100}%" height="23" fill="#0d2406"/>`;
    }));
    return out;
  }

  // Lanes
  el("lanes").innerHTML = tracks.map((t, i) => {
    const clips = t.clips.map(([a, b]) => `
      <div class="absolute inset-y-0 overflow-hidden whitespace-nowrap border-y-2 border-l-2 border-black/40 pl-1 leading-[46px] text-[#0d3a63]" style="left:${pct(a)}%;width:${pct(b) - pct(a)}%;background-color:${t.color}">${t.label || ""}${t.tall ? '<i class="absolute inset-x-0 top-[44px] h-[2px] bg-[#1d6e05]"></i>' : ""}</div>`).join("");
    const selected = t.tall ? `
      <div class="absolute inset-0 bg-white/25"></div>
      <div class="absolute inset-y-0 bg-[#93b0b2]" style="left:${pct(42)}%;width:${6.5 / BARS * 100}%"></div>
      <svg class="absolute inset-0 size-full">${barLines("#6a7274")}</svg>` : "";
    const notes = t.tall ? `<svg class="absolute inset-0 size-full">${drawNotes(t)}</svg>` : "";
    const dash = i < 6 ? `<div class="absolute inset-y-0 flex w-[3px] flex-col justify-between py-1" style="left:${pct(38) - 0.1}%"><i class="h-2 bg-black"></i><i class="h-2 bg-black"></i></div>` : "";
    return `<div class="relative ${t.tall ? "h-[242px]" : "h-12"}">${selected}${clips}${notes}${dash}</div><div class="h-[5px] bg-[#545454]"></div>`;
  }).join("");

  // Locator lines and playhead
  html = "";
  locators.forEach(([b]) => html += vline(pct(b), 0, "100%", "#222", 2));
  html += vline(pct(67), 0, "100%", "#222", 2);
  html += vline(pct(42.9), 40, "99.500%", "#000", 3);
  el("markers").innerHTML = html;

  // Track headers
  const meter = (h, level) => {
    const g = Math.round((h - 6) * level);
    return `<svg width="20" height="${h}" class="shrink-0"><path d="M0 0h9v3H0zM11 0h9v3h-9zM0 6h9V${h}H0zM11 6h9V${h}h-9z" fill="#111"/><path d="M0 ${h - g}h9v${g}H0zM11 ${h - g}h9v${g}h-9z" fill="#22f05a"/>${level > 0.8 ? `<path d="M0 ${h - g}h20v4H0z" fill="#dcb92a"/>` : ""}</svg>`;
  };
  const pick = (label, text, icon) => `
    <div class="relative"><select aria-label="${label}" class="block h-9 w-full appearance-none border-2 border-[#333] bg-[#e2e2e2] pr-6 ${icon ? "pl-7" : "pl-1"}"><option>${text}</option></select>
    ${icon ? '<svg width="10" height="26" class="absolute left-2 top-[5px]"><circle cx="5" cy="4" r="4"/><circle cx="5" cy="13" r="4"/><circle cx="5" cy="22" r="4"/></svg>' : ""}
    <svg width="18" height="16" class="absolute right-[5px] top-[10px]"><path d="M0 0h18L9 16z"/></svg></div>`;
  el("headers").innerHTML = tracks.map((t) => `
    <div class="flex gap-[5px] border-b-5 border-[#545454] bg-[#545454]">
      <div class="relative flex w-[255px] items-start gap-[19px] pl-2 pt-[6px] ${t.tall ? "h-[242px]" : "h-12"}" style="background-color:${t.tall ? "#c6f7fb" : t.color}">
        <button aria-label="Unfold ${t.name}"><svg width="36" height="36" class="block"><circle cx="18" cy="18" r="16.500" fill="none" stroke="#222" stroke-opacity="0.850" stroke-width="2.500"/><path d="${t.tall ? "M9 13h17l-8.500 13z" : "M12 9l16 9-16 9z"}" fill="#111" opacity="0.800"/></svg></button>
        <span class="whitespace-nowrap text-[28px] leading-9 text-black/75">${t.name}</span>
        ${t.tall ? '<svg width="24" height="38" viewBox="0 0 24 38" class="absolute left-8 top-5"><path d="M1 1v28l6-6 5 13 6-3-5-12h9z" stroke="#fff" stroke-width="1.500"/></svg>' : ""}
      </div>
      <div class="flex w-[203px] flex-col gap-3 px-[6px] pt-[6px] ${t.tall ? "bg-[#bcbcbc]" : "bg-[#9e9e9e]"}">
        ${t.tall ? `
        ${pick("Input type", "All Ins")}
        ${pick("Input channel", "All Channels", true)}
        <div class="flex justify-between">
          <button class="h-9 w-[46px] border-2 border-[#333] bg-[#d0d0d0] leading-8">In</button>
          <button class="h-9 w-[72px] border-2 border-[#333] bg-[#ffb000] leading-8">Auto</button>
          <button class="h-9 w-[54px] border-2 border-[#333] bg-[#d0d0d0] leading-8">Off</button>
        </div>
        ${pick("Output type", "Main")}` : ""}
        <div class="h-9 border-2 border-[#333]"></div>
      </div>
      <div class="flex flex-1 items-start gap-3 pl-[6px] pt-[6px] ${t.tall ? "bg-[#bcbcbc]" : "bg-[#9e9e9e]"}">
        <div class="flex flex-col gap-3">
          <div class="flex gap-3">
            <button class="h-9 w-[125px] border-2 border-[#333] bg-[#ffb000] leading-8">${t.n}</button>
            <button class="h-9 w-[56px] border-2 border-[#333] bg-[#d0d0d0] leading-8">S</button>
            <button aria-label="Arm ${t.name}" class="flex h-9 w-[57px] items-center justify-center border-2 border-[#333] ${t.armed ? "bg-[#ff5050]" : "bg-[#d0d0d0]"}"><svg width="22" height="22"><circle cx="11" cy="11" r="10"/>${t.audio ? "" : `<path d="M12 3v10" stroke="${t.armed ? "#ff5050" : "#d0d0d0"}" stroke-width="3"/><circle cx="10" cy="14" r="3.500" fill="${t.armed ? "#ff5050" : "#d0d0d0"}"/>`}</svg></button>
          </div>
          ${t.tall ? `<div class="flex gap-3">
            <div class="h-9 w-[125px] border-2 border-[#333] bg-linear-to-r from-[#25c2d4] from-63% to-[#e2e2e2] to-63% text-center">-8.9</div>
            <div class="h-9 w-[125px] border-2 border-[#333] bg-[#e2e2e2] text-center">C</div>
          </div>` : ""}
        </div>
        ${meter(t.tall ? 232 : 37, t.level)}
      </div>
    </div>`).join("");

  // Sample waveform
  const env = [[281, 1, 1], [296, 10, 10], [308, 46, 46], [330, 52, 48], [360, 34, 36], [400, 34, 42], [440, 32, 38], [500, 34, 38], [560, 30, 36], [650, 24, 30], [760, 20, 26], [860, 20, 21], [1000, 15, 18], [1100, 16, 16], [1250, 13, 14], [1400, 12, 12], [1460, 8, 8], [1486, 1, 1], [1760, 1, 1]];
  const spikes = [[383, 84, 0], [326, 0, 115], [386, 0, 72], [404, 52, 0], [455, 48, 0], [502, 48, 0], [503, 0, 56], [563, 0, 60], [622, 0, 48], [735, 32, 33], [918, 22, 28], [1270, 24, 22], [1328, 24, 20], [1388, 26, 18], [1445, 18, 14]];
  let seed = 7;
  const rnd = () => (seed = (seed * 16807) % 2147483647) / 2147483647;
  const up = [], down = [];
  for (let x = 281; x < 1760; x += 3) {
    const k = env.findIndex((e) => e[0] > x) - 1;
    const a = env[k], b = env[k + 1];
    const f = (x - a[0]) / (b[0] - a[0]);
    let u = (a[1] + (b[1] - a[1]) * f) * (0.75 + rnd() * 0.7);
    let d = (a[2] + (b[2] - a[2]) * f) * (0.75 + rnd() * 0.7);
    spikes.forEach(([sx, su, sd]) => {
      const near = 1 - Math.abs(x - sx) / 9;
      if (near > 0) { u = Math.max(u, su * near); d = Math.max(d, sd * near); }
    });
    up.push(`${x},${(133 - u).toFixed(1)}`);
    down.unshift(`${x},${(133 + d).toFixed(1)}`);
  }
  html = `<path d="M15 133H1828" stroke="#8a8a8a" stroke-width="2"/>`;
  ["0:00", "0:00:050", "0:00:100", "0:00:150", "0:00:200"].forEach((s, i) => {
    html += `<path d="M${16 + i * 386} 228v26" stroke="#3c3c3c" stroke-width="2"/><text x="${24 + i * 386}" y="238" fill="#565656" font-size="26">${s}</text>`;
  });
  for (let i = 0; i < 24; i++) if (i % 5) html += `<path d="M${16 + i * 77.2} 243v11" stroke="#3c3c3c" stroke-width="2"/>`;
  html += `<polygon points="${up.join(" ")} ${down.join(" ")}" fill="#ffb000"/>
    <path d="M281 14v240M1829 14v240" stroke="#a5a5a5" stroke-width="3"/><path d="M281 14l23 13-23 13zM1829 14l-22 13 22 13z" fill="#a5a5a5"/>`;
  el("wave").innerHTML = html;

  // Knobs: the arc runs from 200 to 450 degrees, clockwise from the top
  document.querySelectorAll("[data-knob]").forEach((k) => {
    const v = Number(k.dataset.knob);
    const at = (deg, r) => `${(27 + r * Math.sin(deg * Math.PI / 180)).toFixed(1)} ${(27 - r * Math.cos(deg * Math.PI / 180)).toFixed(1)}`;
    const arc = (a, b, c) => b - a < 1 ? "" : `<path d="M${at(a, 24)}A24 24 0 ${b - a > 180 ? 1 : 0} 1 ${at(b, 24)}" fill="none" stroke="${c}" stroke-width="4.500"/>`;
    k.innerHTML = `<svg width="54" height="56" class="block">${arc(200, Math.max(v, 200), "#2de6ff")}${arc(Math.max(v, 200), 450, "#111")}<path d="M27 27L${at(v, 26)}" stroke="#111" stroke-width="5"/></svg>`;
  });
</script>
</body>
</html>
